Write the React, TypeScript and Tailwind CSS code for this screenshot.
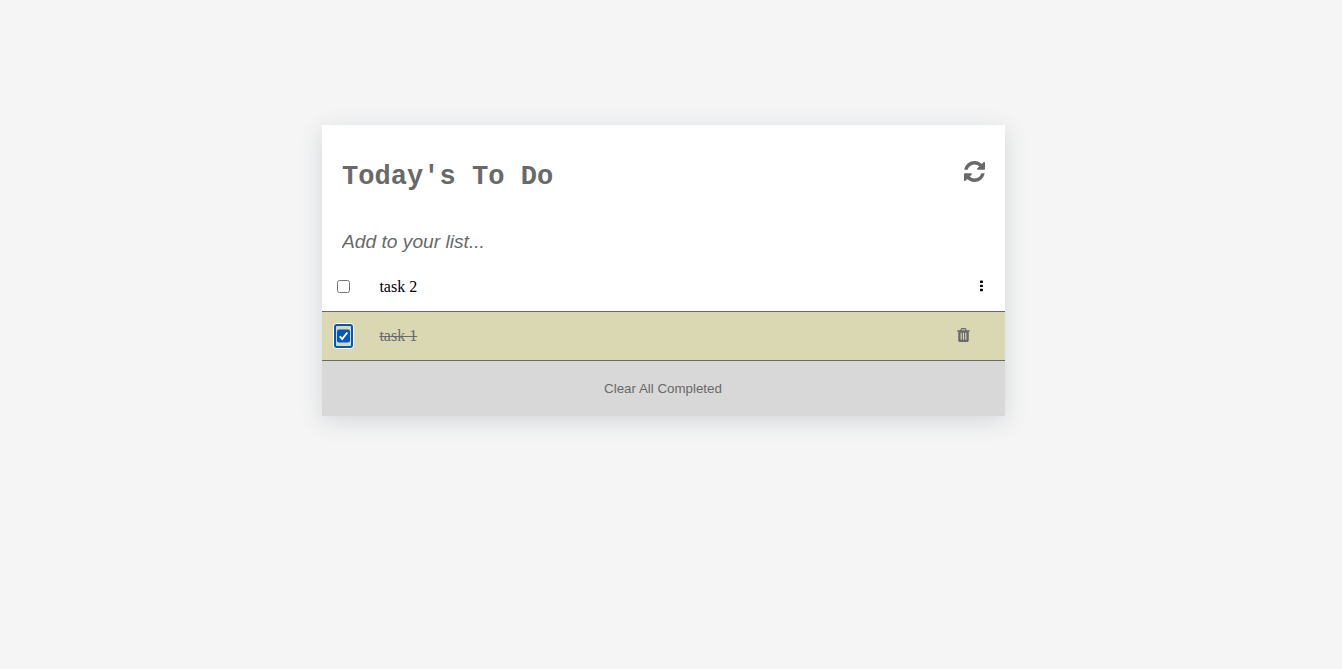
import React, { useState } from 'react';

function RefreshIcon() {
  return (
    <svg width="21" height="21" viewBox="128 128 1536 1536" fill="#696969">
      <path d="M1639 1056q0 5-1 7-64 268-268 434.5t-478 166.5q-146 0-282.5-55t-243.5-157l-129 129q-19 19-45 19t-45-19-19-45v-448q0-26 19-45t45-19h448q26 0 45 19t19 45-19 45l-137 137q71 66 161 102t187 36q134 0 250-65t186-179q11-17 53-117 8-23 30-23h192q13 0 22.5 9.5t9.5 22.5zm25-800v448q0 26-19 45t-45 19h-448q-26 0-45-19t-19-45 19-45l138-138q-148-137-349-137-134 0-250 65t-186 179q-11 17-53 117-8 23-30 23h-199q-13 0-22.5-9.5t-9.5-22.5v-7q65-268 270-434.5t480-166.5q146 0 284 55.5t245 156.5l130-129q19-19 45-19t45 19 19 45z" />
    </svg>
  );
}

function DotsIcon() {
  return (
    <svg width="4" height="12" viewBox="0 0 4 12" fill="#000">
      <rect x="0" y="0.6" width="2.9" height="2.4" rx="0.6" />
      <rect x="0" y="4.7" width="2.9" height="2.4" rx="0.6" />
      <rect x="0" y="8.8" width="2.9" height="2.4" rx="0.6" />
    </svg>
  );
}

function TrashIcon() {
  return (
    <svg width="13" height="14" viewBox="192 128 1408 1536" fill="#696969">
      <path d="M704 1376v-704q0-14-9-23t-23-9h-64q-14 0-23 9t-9 23v704q0 14 9 23t23 9h64q14 0 23-9t9-23zm256 0v-704q0-14-9-23t-23-9h-64q-14 0-23 9t-9 23v704q0 14 9 23t23 9h64q14 0 23-9t9-23zm256 0v-704q0-14-9-23t-23-9h-64q-14 0-23 9t-9 23v704q0 14 9 23t23 9h64q14 0 23-9t9-23zm-544-992h448l-48-117q-7-9-17-11h-317q-10 2-17 11zm928 32v64q0 14-9 23t-23 9h-96v948q0 83-47 143.5t-113 60.5h-832q-66 0-113-58.5t-47-141.5v-952h-96q-14 0-23-9t-9-23v-64q0-14 9-23t23-9h309l70-167q15-37 54-63t79-26h320q40 0 79 26t54 63l70 167h309q14 0 23 9t9 23z" />
    </svg>
  );
}

function Checkbox({ checked, onChange }: { checked: boolean; onChange: () => void }) {
  return (
    <button
      role="checkbox"
      aria-checked={checked}
      onClick={onChange}
      className={
        checked
          ? 'flex h-[26px] w-[21px] items-center justify-center rounded-[4px] border border-white bg-[#dad8b3] outline-none'
          : 'flex h-[25px] w-[21px] items-center justify-center outline-none'
      }
    >
      {checked ? (
        <span className="flex h-[24px] w-[19px] shrink-0 items-center justify-center rounded-[3px] border-2 border-[#0057c2]">
          <svg width="13" height="14" viewBox="0 0 13 14" className="shrink-0">
            <rect y="0.5" width="13" height="13" rx="2" fill="#0057c2" />
            <path d="M2.7 7.4L5.2 10L10.3 3.5" fill="none" stroke="#fff" strokeWidth="2" />
          </svg>
        </span>
      ) : (
        <span className="h-[13px] w-[13px] rounded-[2.5px] border border-[#767676] bg-white" />
      )}
    </button>
  );
}

export default function App() {
  const [tasks, setTasks] = useState([
    { name: 'task 2', done: false },
    { name: 'task 1', done: true },
  ]);
  const toggle = (index: number) =>
    setTasks(tasks.map((t, i) => (i === index ? { ...t, done: !t.done } : t)));

  return (
    <div className="min-h-screen bg-[#f5f5f5] pt-[125px] pl-[322px]">
      <main className="flex w-[683px] flex-col bg-white shadow-[0_5px_22px_rgba(40,60,80,0.16)]">
        <header className="flex h-[93px] items-start justify-between px-5">
          <h1 className="pt-[36px] font-['Courier_New','Liberation_Mono',monospace] text-[27.1px] leading-[32px] font-bold text-[#696969]">
            Today's To Do
          </h1>
          <button aria-label="Refresh" className="mt-[36px]">
            <RefreshIcon />
          </button>
        </header>
        <div className="flex h-[44px] items-center px-5 pt-[3px]">
          <input
            placeholder="Add to your list..."
            className="w-full font-['Liberation_Sans',sans-serif] text-[19.2px] leading-6 italic outline-none placeholder:text-[#696969] placeholder:opacity-100"
          />
        </div>
        <ul>
          {tasks.map((task, i) => (
            <li
              key={task.name}
              className={
                task.done
                  ? 'flex h-[49px] items-center border-b border-[#696969] bg-[#dad8b3] pl-[11px]'
                  : 'flex h-[50px] items-center border-b border-[#696969] pl-[11px]'
              }
            >
              <Checkbox checked={task.done} onChange={() => toggle(i)} />
              <span
                className={
                  task.done
                    ? "ml-[25.4px] flex-1 font-['Liberation_Serif',serif] text-base text-[#696969] line-through"
                    : "ml-[25.4px] flex-1 font-['Liberation_Serif',serif] text-base text-black"
                }
              >
                {task.name}
              </span>
              <span className={task.done ? 'mr-[35px] pb-[2px]' : 'mr-[21.5px] pb-px'}>
                {task.done ? <TrashIcon /> : <DotsIcon />}
              </span>
            </li>
          ))}
        </ul>
        <button className="h-[55px] bg-[#d8d8d8] pr-px font-['Liberation_Sans',sans-serif] text-[13.33px] text-[#696969]">
          Clear All Completed
        </button>
      </main>
    </div>
  );
}
